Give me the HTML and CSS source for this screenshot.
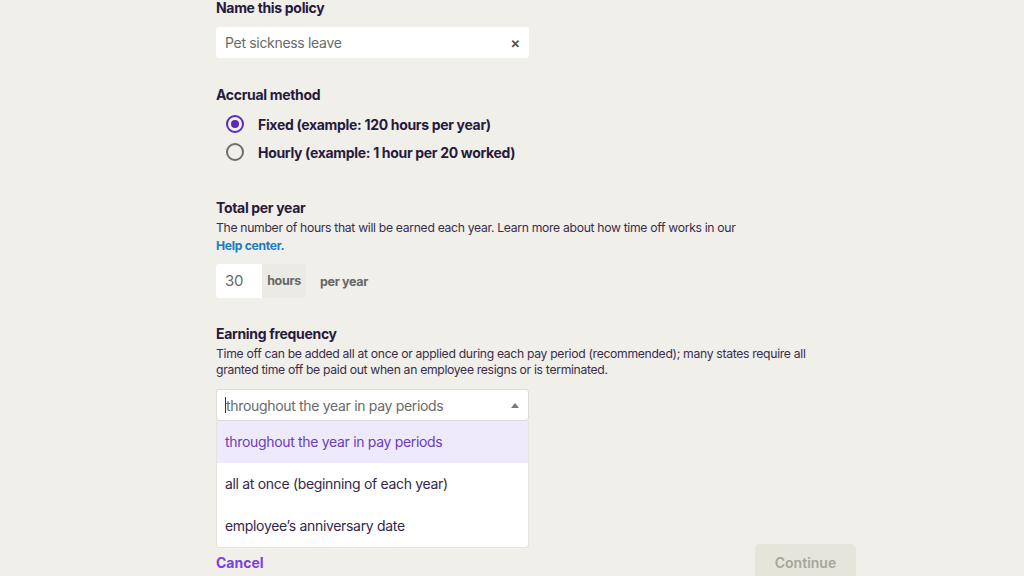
FILE: index.html
```html
<!DOCTYPE html>
<html lang="en">
<head>
    <meta charset="UTF-8">
    <meta name="viewport" content="width=device-width, initial-scale=1.0">
    <title>Time off policy</title>
    <link rel="stylesheet" href="styles.css">
</head>
<body>

    <div class="policy-form">
        <div class="field">
            <label class="field-label" for="policy-name">Name this policy</label>
            <div class="text-input">
                <input type="text" id="policy-name" value="Pet sickness leave">
                <span class="clear">&times;</span>
            </div>
        </div>

        <div class="field accrual">
            <div class="field-label">Accrual method</div>
            <div class="radio-list">
                <div class="radio-row">
                    <span class="radio checked"></span>
                    <span>Fixed (example: 120 hours per year)</span>
                </div>
                <div class="radio-row">
                    <span class="radio"></span>
                    <span>Hourly (example: 1 hour per 20 worked)</span>
                </div>
            </div>
        </div>

        <div class="field total">
            <div class="field-label">Total per year</div>
            <p class="hint">The number of hours that will be earned each year. Learn more about how time off works in our<br><a href="#">Help center.</a></p>
            <div class="hours-row">
                <div class="hours-input">
                    <span class="hours-value">30</span>
                    <span class="hours-unit">hours</span>
                </div>
                <span class="per-year">per year</span>
            </div>
        </div>

        <div class="field frequency">
            <div class="field-label">Earning frequency</div>
            <p class="hint">Time off can be added all at once or applied during each pay period (recommended); many states require all granted time off be paid out when an employee resigns or is terminated.</p>
            <div class="select">
                <div class="select-box">
                    <span class="select-value"><span class="caret-line"></span>throughout the year in pay periods</span>
                    <span class="select-arrow"></span>
                </div>
                <ul class="options">
                    <li class="active">throughout the year in pay periods</li>
                    <li>all at once (beginning of each year)</li>
                    <li>employee’s anniversary date</li>
                </ul>
            </div>
        </div>

        <div class="actions">
            <a href="#" class="cancel">Cancel</a>
            <button class="continue" disabled>Continue</button>
        </div>
    </div>

</body>
</html>
```

FILE: styles.css
```css
body {
    margin: 0;
    background-color: #f0efea;
    font-family: Inter, "Noto Sans", sans-serif;
    color: #271a3c;
    letter-spacing: -0.02em;
}

.policy-form {
    width: 640px;
    margin-left: 216px;
}

.field-label {
    display: block;
    font-size: 14px;
    font-weight: 700;
    line-height: 16px;
    color: #271a3c;
}

.text-input {
    width: 313px;
    height: 31px;
    margin-top: 11px;
    background-color: #fff;
    border-radius: 3px;
    display: flex;
    align-items: center;
    box-sizing: border-box;
    padding: 0 9px;
}

.text-input input {
    flex: 1;
    border: none;
    outline: none;
    padding: 0;
    font-family: inherit;
    letter-spacing: inherit;
    font-size: 14px;
    color: #6a6a6a;
    background: transparent;
}

.clear {
    font-size: 15px;
    color: #555;
    font-weight: 600;
}

.accrual {
    margin-top: 29px;
}

.radio-list {
    margin-top: 7px;
    padding-left: 10px;
}

.radio-row {
    display: flex;
    align-items: center;
    height: 28px;
    font-size: 14px;
    font-weight: 700;
    color: #271a3c;
}

.radio {
    width: 14px;
    height: 14px;
    border: 2px solid #6e6e6e;
    border-radius: 50%;
    margin-right: 14px;
    position: relative;
}

.radio.checked {
    border-color: #5b2bb5;
}

.radio.checked::after {
    content: "";
    position: absolute;
    top: 3px;
    left: 3px;
    width: 8px;
    height: 8px;
    border-radius: 50%;
    background-color: #5b2bb5;
}

.total {
    margin-top: 34px;
}

.hint {
    margin: 3px 0 0;
    font-size: 12.2px;
    line-height: 18px;
    color: #3a2d4c;
}

.frequency .hint {
    max-width: 612px;
    line-height: 16px;
    margin-top: 4px;
}

.hint a {
    color: #1b7cc0;
    font-weight: 700;
    text-decoration: none;
}

.hours-row {
    display: flex;
    align-items: center;
    margin-top: 9px;
}

.hours-input {
    display: flex;
    height: 34px;
    border-radius: 3px;
    overflow: hidden;
}

.hours-value {
    width: 46px;
    background-color: #fff;
    box-sizing: border-box;
    padding-left: 9px;
    line-height: 34px;
    font-size: 15px;
    color: #6a6a6a;
}

.hours-unit {
    width: 44px;
    background-color: #ebeae5;
    text-align: center;
    line-height: 34px;
    font-size: 12.5px;
    font-weight: 700;
    color: #676767;
}

.per-year {
    margin-left: 14px;
    font-size: 12.5px;
    font-weight: 700;
    color: #676767;
}

.frequency {
    margin-top: 28px;
}

.select {
    position: relative;
    width: 313px;
    margin-top: 11px;
}

.select-box {
    height: 32px;
    background-color: #fff;
    border: 1px solid #dcdbd6;
    border-radius: 3px;
    box-sizing: border-box;
    display: flex;
    align-items: center;
    justify-content: space-between;
    padding: 0 9px 0 8px;
}

.select-value {
    font-size: 14px;
    color: #6a6a6a;
    display: flex;
    align-items: center;
}

.caret-line {
    width: 1px;
    height: 16px;
    background-color: #333;
}

.select-arrow {
    width: 0;
    height: 0;
    border-left: 4px solid transparent;
    border-right: 4px solid transparent;
    border-bottom: 5px solid #777;
}

.options {
    position: absolute;
    top: 32px;
    left: 0;
    right: 0;
    margin: 0;
    padding: 0;
    list-style: none;
    background-color: #fff;
    border: 1px solid #e4e3de;
    border-top: none;
    border-radius: 0 0 3px 3px;
}

.options li {
    height: 42px;
    line-height: 42px;
    padding-left: 8px;
    font-size: 14px;
    color: #34284a;
}

.options li.active {
    background-color: #efe9fc;
    color: #6a3eb3;
}

.actions {
    display: flex;
    justify-content: space-between;
    align-items: center;
    margin-top: 123px;
}

.cancel {
    font-size: 14px;
    font-weight: 700;
    color: #7d3fdc;
    text-decoration: none;
    letter-spacing: 0;
}

.continue {
    width: 101px;
    height: 36px;
    border: none;
    border-radius: 5px;
    background-color: #e6e5db;
    color: #a6a69b;
    font-family: inherit;
    font-size: 14px;
    font-weight: 600;
    letter-spacing: 0;
}
```
